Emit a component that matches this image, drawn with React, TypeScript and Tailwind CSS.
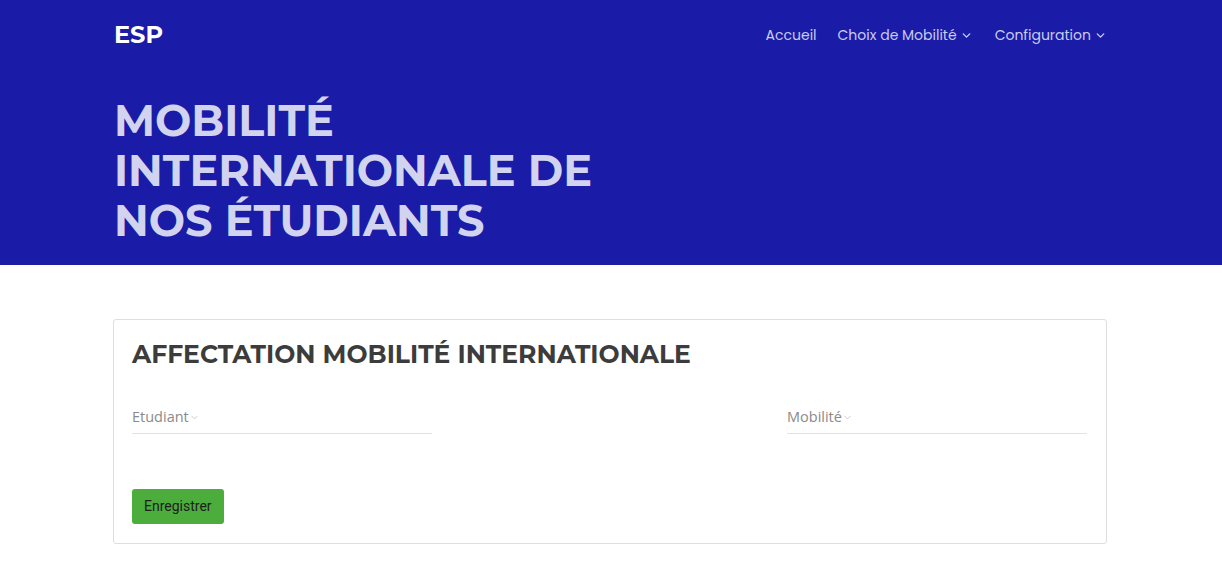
import { ChevronDown } from 'lucide-react';

const heading = { fontFamily: 'Montserrat, Inter, "Noto Sans", sans-serif' };

function NavItem({ label, menu }: { label: string; menu?: boolean }) {
  return (
    <a href="#" className="flex items-center gap-[3px] text-[14px] text-[#c9cbf0] hover:text-white">
      {label}
      {menu && <ChevronDown size={13} strokeWidth={2.5} className="mt-px" />}
    </a>
  );
}

function SelectField({ label }: { label: string }) {
  return (
    <div className="w-[300px] border-b border-[#e2e2e2] pb-[6px] flex items-center text-[14.5px] text-[#8a8a8a]" style={{ fontFamily: '"Open Sans", sans-serif' }}>
      <span>{label}</span>
      <ChevronDown size={11} strokeWidth={1.5} className="text-[#b8b8b8] mt-0.5" />
    </div>
  );
}

export default function App() {
  return (
    <div className="min-h-screen bg-white">
      {/* hero */}
      <header className="bg-[#1a1ca8] h-[265px]">
        <div className="max-w-[996px] mx-auto">
          <nav className="flex items-center justify-between h-[70px]" style={{ fontFamily: 'Poppins, Inter, sans-serif' }}>
            <span className="text-white text-[24px] font-bold pl-px" style={heading}>ESP</span>
            <div className="flex items-center pr-[2px]">
              <NavItem label="Accueil" />
              <span className="w-[21px]" />
              <NavItem label="Choix de Mobilité" menu />
              <span className="w-[22px]" />
              <NavItem label="Configuration" menu />
            </div>
          </nav>
          <h1 className="mt-[26px] text-[#d2d3ee] text-[43px] font-bold leading-[50px] uppercase pl-px" style={heading}>
            Mobilité<br />
            Internationale de<br />
            nos étudiants
          </h1>
        </div>
      </header>

      {/* form card */}
      <main className="max-w-[996px] mx-auto pt-[54px] pr-[2px]">
        <section className="border border-[#dedede] rounded-[3px] px-[18px] pt-[16px] pb-[19px]">
          <h2 className="text-[#3c3c3c] text-[25px] font-bold uppercase" style={heading}>
            Affectation mobilité internationale
          </h2>
          <div className="flex justify-between mt-[32px] pr-px">
            <SelectField label="Etudiant" />
            <SelectField label="Mobilité" />
          </div>
          <button
            className="mt-[55px] bg-[#4cac3c] text-[#1d1d1d] text-[14px] px-3 h-[35px] rounded-[3px]"
            style={{ fontFamily: 'Roboto, sans-serif' }}
          >
            Enregistrer
          </button>
        </section>
      </main>
    </div>
  );
}
